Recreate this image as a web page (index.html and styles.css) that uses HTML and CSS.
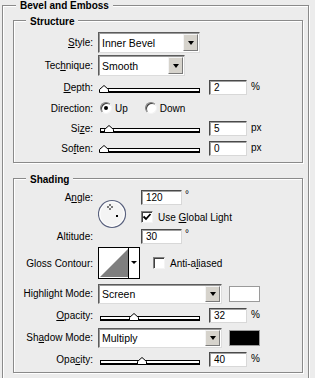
FILE: index.html
```html
<!DOCTYPE html>
<html lang="en">
<head>
    <meta charset="UTF-8">
    <meta name="viewport" content="width=device-width, initial-scale=1.0">
    <title>Bevel and Emboss</title>
    <link rel="stylesheet" href="styles.css">
</head>
<body>

    <div class="group outer">
        <div class="group-title">Bevel and Emboss</div>

        <!-- Structure -->
        <div class="group structure">
            <div class="group-title">Structure</div>

            <div class="row row-select first">
                <span class="lbl"><u>S</u>tyle:</span>
                <div class="select style-select">
                    <span class="select-val">Inner Bevel</span>
                    <span class="select-btn"></span>
                </div>
            </div>

            <div class="row row-select">
                <span class="lbl">Tec<u>h</u>nique:</span>
                <div class="select technique-select">
                    <span class="select-val">Smooth</span>
                    <span class="select-btn"></span>
                </div>
            </div>

            <div class="row row-depth">
                <span class="lbl"><u>D</u>epth:</span>
                <div class="slider">
                    <svg class="thumb" style="left: -2px" width="10" height="8" viewBox="0 0 10 8"><path d="M0.5 7.5V4.5L5 0.5L9.5 4.5V7.5Z" fill="#fff" stroke="#000"/></svg>
                </div>
                <span class="num">2</span>
                <span class="unit">%</span>
            </div>

            <div class="row row-plain">
                <span class="lbl">Direction:</span>
                <span class="radio checked"></span>
                <span class="radio-text">Up</span>
                <span class="radio down"></span>
                <span class="radio-text">Down</span>
            </div>

            <div class="row row-plain">
                <span class="lbl">Si<u>z</u>e:</span>
                <div class="slider">
                    <svg class="thumb" style="left: 3px" width="10" height="8" viewBox="0 0 10 8"><path d="M0.5 7.5V4.5L5 0.5L9.5 4.5V7.5Z" fill="#fff" stroke="#000"/></svg>
                </div>
                <span class="num">5</span>
                <span class="unit">px</span>
            </div>

            <div class="row row-plain">
                <span class="lbl">So<u>f</u>ten:</span>
                <div class="slider">
                    <svg class="thumb" style="left: -2px" width="10" height="8" viewBox="0 0 10 8"><path d="M0.5 7.5V4.5L5 0.5L9.5 4.5V7.5Z" fill="#fff" stroke="#000"/></svg>
                </div>
                <span class="num">0</span>
                <span class="unit">px</span>
            </div>
        </div>

        <!-- Shading -->
        <div class="group shading">
            <div class="group-title">Shading</div>

            <div class="angle-grid">
                <span class="lbl angle-lbl">A<u>n</u>gle:</span>
                <div class="dial">
                    <svg width="30" height="32" viewBox="0 0 30 32">
                        <circle cx="14" cy="16" r="13.5" fill="#f4f4f4" stroke="#59617e" stroke-width="1.2"/>
                        <circle cx="14" cy="16" r="12.2" fill="none" stroke="#fff" stroke-width="1"/>
                        <path d="M12 6V8M12 10V12M9 9H11M13 9H15" stroke="#000" stroke-width="1"/>
                        <rect x="18" y="17" width="2" height="2" fill="#000"/>
                    </svg>
                </div>
                <div class="field">
                    <span class="num wide">120</span>
                    <span class="deg">°</span>
                </div>
                <div class="field">
                    <span class="check on">
                        <svg width="10" height="10" viewBox="0 0 10 10"><path d="M1.5 4.5L4 7L8.5 2" fill="none" stroke="#000" stroke-width="1.8"/></svg>
                    </span>
                    <span class="check-text">Use <u>G</u>lobal Light</span>
                </div>
                <span class="lbl altitude-lbl">Altitude:</span>
                <div class="field">
                    <span class="num wide">30</span>
                    <span class="deg">°</span>
                </div>
            </div>

            <div class="row row-gloss">
                <span class="lbl">Gloss Contour:</span>
                <div class="contour">
                    <svg width="42" height="32" viewBox="0 0 42 32">
                        <rect x="0.5" y="0.5" width="41" height="31" fill="#fff" stroke="#000"/>
                        <path d="M2 30L30 2V30Z" fill="#7f7f7f"/>
                        <path d="M30.5 1V31" stroke="#000"/>
                        <path d="M33 14H39L36 17Z" fill="#000"/>
                    </svg>
                </div>
                <span class="check anti"></span>
                <span class="check-text">Anti-a<u>l</u>iased</span>
            </div>

            <div class="row row-select">
                <span class="lbl">Highlight Mode:</span>
                <div class="select mode-select">
                    <span class="select-val">Screen</span>
                    <span class="select-btn"></span>
                </div>
                <span class="swatch white"></span>
            </div>

            <div class="row row-opacity">
                <span class="lbl"><u>O</u>pacity:</span>
                <div class="slider">
                    <svg class="thumb" style="left: 28px" width="10" height="8" viewBox="0 0 10 8"><path d="M0.5 7.5V4.5L5 0.5L9.5 4.5V7.5Z" fill="#fff" stroke="#000"/></svg>
                </div>
                <span class="num">32</span>
                <span class="unit">%</span>
            </div>

            <div class="row row-select">
                <span class="lbl">Sh<u>a</u>dow Mode:</span>
                <div class="select mode-select">
                    <span class="select-val">Multiply</span>
                    <span class="select-btn"></span>
                </div>
                <span class="swatch black"></span>
            </div>

            <div class="row row-opacity">
                <span class="lbl">Opa<u>c</u>ity:</span>
                <div class="slider">
                    <svg class="thumb" style="left: 36px" width="10" height="8" viewBox="0 0 10 8"><path d="M0.5 7.5V4.5L5 0.5L9.5 4.5V7.5Z" fill="#fff" stroke="#000"/></svg>
                </div>
                <span class="num">40</span>
                <span class="unit">%</span>
            </div>
        </div>
    </div>

</body>
</html>
```

FILE: styles.css
```css
body {
    margin: 0;
    height: 378px;
    background-color: #ececec;
    font-family: "Liberation Sans", Arial, sans-serif;
    font-size: 10px;
    color: #000;
    overflow: hidden;
}

u {
    text-underline-offset: 1px;
}

/* etched group boxes */
.group {
    box-sizing: border-box;
    border: 1px solid #8a8a8a;
    box-shadow: inset 1px 1px 0 #fff, 1px 1px 0 #fff;
}

.group-title {
    width: fit-content;
    padding: 0 4px;
    background-color: #ececec;
    font-weight: bold;
    line-height: 12px;
}

/* outer box runs on below the visible area, so no bottom edge */
.outer {
    margin: 5px 0 0 2px;
    width: 307px;
    height: 373px;
    border-bottom: none;
}

.outer > .group-title {
    margin: -6px 0 0 13px;
}

.structure,
.shading {
    width: 290px;
    margin-left: 10px;
}

.structure {
    margin-top: 8px;
    padding-bottom: 4px;
}

.shading {
    margin-top: 15px;
    padding-bottom: 2px;
}

.structure > .group-title,
.shading > .group-title {
    margin: -5px 0 0 12px;
}

/* rows */
.row {
    display: flex;
    align-items: center;
}

.row.first {
    margin-top: 3px;
}

.row-select {
    height: 23px;
}

.row-depth,
.row-opacity {
    height: 21px;
}

.row-plain {
    height: 20px;
}

.row-gloss {
    height: 38px;
}

.lbl {
    flex: none;
    width: 79px;
    margin-right: 5px;
    text-align: right;
    white-space: nowrap;
}

/* dropdowns */
.select {
    display: flex;
    align-items: stretch;
    box-sizing: border-box;
    height: 21px;
    background-color: #fff;
    border: 1px solid;
    border-color: #5c5c5c #dcdcdc #dcdcdc #5c5c5c;
    box-shadow: inset 1px 1px 0 #9a9a9a;
    padding: 1px 1px 1px 3px;
}

.select-val {
    flex: 1;
    display: flex;
    align-items: center;
    font-size: 10.5px;
}

.select-btn {
    flex: none;
    width: 15px;
    box-sizing: border-box;
    background-color: #d6d3cc;
    border: 1px solid;
    border-color: #f4f4f4 #7a7a7a #7a7a7a #f4f4f4;
    display: flex;
    align-items: center;
    justify-content: center;
}

.select-btn::after {
    content: "";
    border-left: 3.5px solid transparent;
    border-right: 3.5px solid transparent;
    border-top: 4px solid #000;
}

.style-select {
    width: 102px;
}

.technique-select {
    width: 87px;
}

.mode-select {
    width: 124px;
    height: 20px;
}

/* sliders */
.slider {
    position: relative;
    flex: none;
    box-sizing: border-box;
    width: 100px;
    height: 5px;
    margin: 5px 0 0 2px;
    background-color: #fff;
    border: 1px solid #000;
    border-bottom-width: 2px;
}

.thumb {
    position: absolute;
    bottom: -2px;
    display: block;
}

/* number fields */
.num {
    flex: none;
    box-sizing: border-box;
    width: 38px;
    height: 15px;
    margin-left: 9px;
    padding-left: 4px;
    line-height: 13px;
    background-color: #fff;
    border: 1px solid;
    border-color: #4a4a4a #d8d8d8 #d8d8d8 #4a4a4a;
    box-shadow: inset 1px 1px 0 #a0a0a0;
}

.num.wide {
    width: 41px;
    margin-left: 0;
}

.unit {
    margin-left: 4px;
    margin-top: -2px;
}

.deg {
    align-self: flex-start;
    margin-left: 3px;
    line-height: 9px;
}

/* radios and checkboxes */
.radio,
.check {
    flex: none;
    position: relative;
    box-sizing: border-box;
    width: 12px;
    height: 12px;
    background-color: #fff;
    border: 1px solid;
    border-color: #808080 #f4f4f4 #f4f4f4 #808080;
    box-shadow: inset 1px 1px 0 #404040;
}

.radio {
    border-radius: 50%;
    margin-left: 2px;
}

.radio.checked::after {
    content: "";
    position: absolute;
    left: 3px;
    top: 3px;
    width: 4px;
    height: 4px;
    border-radius: 50%;
    background-color: #000;
}

.radio.down {
    margin-left: 17px;
}

.radio-text {
    margin-left: 3px;
}

.check {
    display: flex;
    align-items: center;
    justify-content: center;
}

.check-text {
    margin-left: 5px;
}

/* angle block */
.angle-grid {
    display: grid;
    grid-template-columns: 79px 38px 1fr;
    grid-template-rows: 15px 12px 15px;
    column-gap: 5px;
    row-gap: 6px;
    margin-top: 4px;
}

.angle-grid .lbl {
    margin-right: 0;
    align-self: center;
}

.angle-lbl {
    grid-column: 1;
    grid-row: 1;
}

.altitude-lbl {
    grid-column: 1;
    grid-row: 3;
}

.dial {
    grid-column: 2;
    grid-row: 1 / 4;
    margin-top: 8px;
}

.dial svg {
    display: block;
}

.field {
    grid-column: 3;
    display: flex;
    align-items: center;
}

/* gloss contour */
.contour svg {
    display: block;
}

.check.anti {
    margin-left: 13px;
}

/* colour swatches */
.swatch {
    flex: none;
    box-sizing: border-box;
    width: 31px;
    height: 16px;
    margin-left: 7px;
    border: 1px solid #9a9a9a;
}

.swatch.white {
    background-color: #fff;
}

.swatch.black {
    background-color: #000;
}
```
